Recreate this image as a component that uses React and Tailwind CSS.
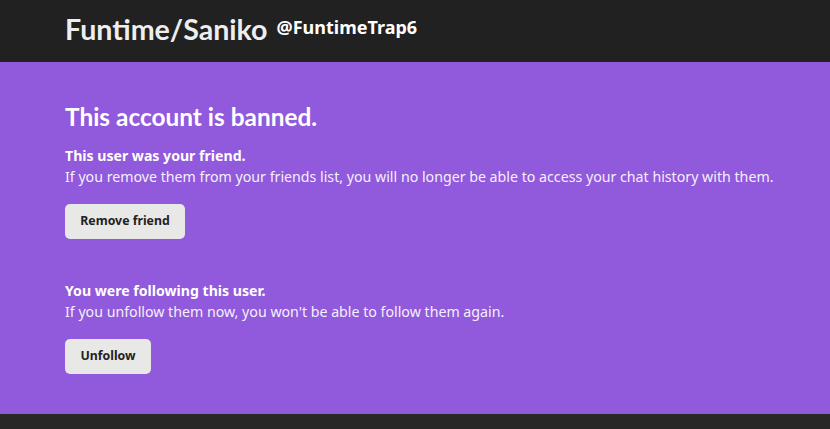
export default function App() {
  const body = { fontFamily: '"Noto Sans", "Open Sans", sans-serif' };
  const lato = { fontFamily: 'Lato, sans-serif' };
  return (
    <div className="w-[830px] h-[429px] flex flex-col bg-[#9159dc] overflow-hidden" style={body}>
      <header className="h-[62px] bg-[#212121] flex items-center px-[65px] gap-[9px] pb-[3px]">
        <h1 className="text-[28.6px] font-bold text-[#eeeeee] leading-none" style={lato}>Funtime/Saniko</h1>
        <span className="text-[18px] font-bold text-white leading-none -mt-[5px]">@FuntimeTrap6</span>
      </header>
      <main className="flex-1 px-[65px] pt-[40px] text-white">
        <h2 className="text-[24.4px] font-bold leading-[30px]" style={lato}>This account is banned.</h2>
        <p className="mt-[14px] text-[14.1px] font-bold leading-[20px]">This user was your friend.</p>
        <p className="text-[14.2px] leading-[22px] text-[#f4f0fb] whitespace-nowrap">If you remove them from your friends list, you will no longer be able to access your chat history with them.</p>
        <button className="mt-[16px] h-[35px] w-[120px] rounded-[5px] bg-[#e8e8e6] text-[#222] text-[12.3px] font-bold">Remove friend</button>
        <p className="mt-[42px] text-[14.1px] font-bold leading-[20px]">You were following this user.</p>
        <p className="text-[14.2px] leading-[22px] text-[#f4f0fb]">If you unfollow them now, you won't be able to follow them again.</p>
        <button className="mt-[16px] h-[35px] w-[86px] rounded-[5px] bg-[#e8e8e6] text-[#222] text-[12.3px] font-bold">Unfollow</button>
      </main>
      <footer className="h-[15px] bg-[#282826]" />
    </div>
  );
}
